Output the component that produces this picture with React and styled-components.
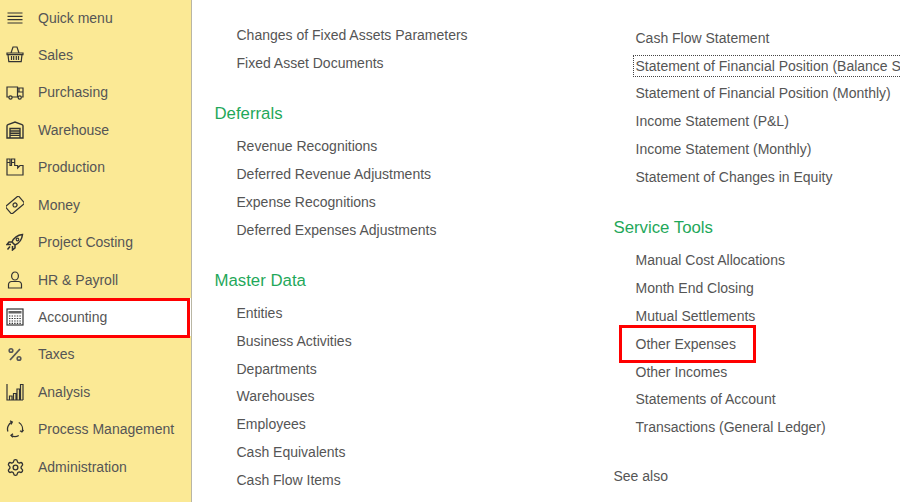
import styled, { createGlobalStyle } from "styled-components";
import { Settings } from "lucide-react";

const GlobalStyle = createGlobalStyle`
  html, body {
    margin: 0;
    height: 100%;
    overflow: hidden;
    background: #fff;
  }
  body {
    font-family: "Liberation Sans", Arial, sans-serif;
    font-size: 14px;
    color: #555;
  }
`;

const Svg = ({ children }) => (
  <IconSvg viewBox="0 0 18 18">{children}</IconSvg>
);

const icons = {
  menu: (
    <Svg>
      <path d="M1.5 4h15M1.5 7.3h15M1.5 10.7h15M1.5 14h15" />
    </Svg>
  ),
  basket: (
    <Svg>
      <path d="M5 7l2-6h4l2 6M1 7h16v1.6H1zM2 8.6l.8 7h12.4l.8-7M5.5 10v4M7.7 10v4M10.3 10v4M12.5 10v4" />
    </Svg>
  ),
  truck: (
    <Svg>
      <path d="M3 14H1V4h10.5v10H6M11.5 5h5.5v9h-1.5M11.5 14H12M12 9h5M13 5.5v3.5" />
      <circle cx="4.5" cy="14.5" r="1.6" />
      <circle cx="13.7" cy="14.5" r="1.6" />
    </Svg>
  ),
  warehouse: (
    <Svg>
      <path d="M1 17V5Q1 4 2 3.6L9 1l7 2.6q1 .4 1 1.4V17zM4 17V7.5h10V17M4 10h10M4 12.2h10M4 14.4h10" strokeWidth="1.4" />
    </Svg>
  ),
  production: (
    <Svg>
      <path d="M1 17V1h3v6.5h1.5V1h3.2v6.5h3V10L14 7.5h3V17zM1 4.5h3M5.5 4.5h3.2" />
    </Svg>
  ),
  money: (
    <Svg>
      <g transform="rotate(-40 9 9)">
        <rect x="0.5" y="4" width="17" height="10" rx="1.5" />
        <circle cx="9" cy="9" r="2" />
      </g>
    </Svg>
  ),
  rocket: (
    <Svg>
      <path d="M16.5 1.5C12 2 8 4.5 6 9l3 3c4.5-2 7-6 7.5-10.500zM6 9H3L1 11.500h4M9 12v3l-2.500 2v-4M4 13.500l-2.500 3" strokeWidth="1.5" />
      <circle cx="11.500" cy="6.500" r="1.300" />
    </Svg>
  ),
  person: (
    <Svg>
      <ellipse cx="9" cy="5" rx="3.4" ry="4" />
      <path d="M2.500 17v-3.500a3 3 0 0 1 3-3h7a3 3 0 0 1 3 3V17z" />
    </Svg>
  ),
  calculator: (
    <Svg>
      <rect x="1" y="1" width="16" height="16" />
      <rect x="2.500" y="3" width="13" height="2.500" fill="#666" stroke="none" />
      <path d="M3 8h12M3 10.500h12M3 13h12M3 15.300h12" strokeDasharray="1.4 1.2" />
    </Svg>
  ),
  percent: (
    <Svg>
      <path d="M14 4L4 15" strokeWidth="1.8" stroke="#555" />
      <circle cx="5" cy="5.500" r="1.800" strokeWidth="1.6" stroke="#555" />
      <circle cx="13" cy="13.500" r="1.800" strokeWidth="1.6" stroke="#555" />
    </Svg>
  ),
  chart: (
    <Svg>
      <path d="M1 1v16h16M3.500 17v-4h2.500v4M7.500 17v-6.500H10V17M11 17V6h2.500v11M14.500 17V1.500H17V17" />
    </Svg>
  ),
  process: (
    <Svg>
      <path d="M1.950 11.570A7.500 7.500 0 0 1 5.830 2.200M12.750 2.500a7.500 7.500 0 0 1 3.300 9.060M12.750 15.500a7.500 7.500 0 0 1-7.500 0" strokeWidth="1.300" />
      <path d="M4 .8l2.300 1.200L5 4.500M14 10.800l1.900 1.200 1.600-2M7 17.300l-2-1.900 2-1.600" strokeWidth="1.300" />
    </Svg>
  ),
  gear: <Settings size={19} strokeWidth={1.7} color="#333" />,
};

const menuItems = [
  { icon: "menu", label: "Quick menu" },
  { icon: "basket", label: "Sales" },
  { icon: "truck", label: "Purchasing" },
  { icon: "warehouse", label: "Warehouse" },
  { icon: "production", label: "Production" },
  { icon: "money", label: "Money" },
  { icon: "rocket", label: "Project Costing" },
  { icon: "person", label: "HR & Payroll" },
  { icon: "calculator", label: "Accounting", active: true },
  { icon: "percent", label: "Taxes" },
  { icon: "chart", label: "Analysis" },
  { icon: "process", label: "Process Management" },
  { icon: "gear", label: "Administration" },
];

const leftColumn = [
  {
    links: ["Changes of Fixed Assets Parameters", "Fixed Asset Documents"],
  },
  {
    title: "Deferrals",
    links: [
      "Revenue Recognitions",
      "Deferred Revenue Adjustments",
      "Expense Recognitions",
      "Deferred Expenses Adjustments",
    ],
  },
  {
    title: "Master Data",
    links: [
      "Entities",
      "Business Activities",
      "Departments",
      "Warehouses",
      "Employees",
      "Cash Equivalents",
      "Cash Flow Items",
      "Expense Items",
    ],
  },
];

const rightColumn = [
  {
    links: [
      "Cash Flow Statement",
      "Statement of Financial Position (Balance Sheet)",
      "Statement of Financial Position (Monthly)",
      "Income Statement (P&L)",
      "Income Statement (Monthly)",
      "Statement of Changes in Equity",
    ],
  },
  {
    title: "Service Tools",
    links: [
      "Manual Cost Allocations",
      "Month End Closing",
      "Mutual Settlements",
      "Other Expenses",
      "Other Incomes",
      "Statements of Account",
      "Transactions (General Ledger)",
    ],
  },
];

const FOCUSED = "Statement of Financial Position (Balance Sheet)";
const MARKED = "Other Expenses";

function Column({ sections, offset }) {
  return (
    <ColumnBox $offset={offset}>
      {sections.map((section, index) => (
        <section key={index}>
          {section.title && <Heading>{section.title}</Heading>}
          {section.links.map((link) => (
            <LinkRow key={link}>
              <LinkText $focused={link === FOCUSED} $marked={link === MARKED}>
                {link}
              </LinkText>
            </LinkRow>
          ))}
        </section>
      ))}
    </ColumnBox>
  );
}

export default function App() {
  return (
    <Page>
      <GlobalStyle />
      <Sidebar>
        {menuItems.map((item) => (
          <MenuItem key={item.label} $active={item.active}>
            <IconBox>{icons[item.icon]}</IconBox>
            {item.label}
          </MenuItem>
        ))}
      </Sidebar>
      <Content>
        <Column sections={leftColumn} offset={21} />
        <div>
          <Column sections={rightColumn} offset={24} />
          <SeeAlso>See also</SeeAlso>
        </div>
      </Content>
    </Page>
  );
}

const Page = styled.div`
  display: flex;
  height: 502px;
  width: 900px;
  overflow: hidden;
`;

const Sidebar = styled.nav`
  flex: none;
  box-sizing: border-box;
  width: 192px;
  height: 502px;
  background: #fbe995;
  border-right: 1px solid #b9b6a4;
`;

const MenuItem = styled.div`
  position: relative;
  display: flex;
  align-items: center;
  box-sizing: border-box;
  height: 37.45px;
  padding-left: 5.5px;
  gap: 14.5px;
  white-space: nowrap;
  background: ${({ $active }) => ($active ? "#fff" : "transparent")};

  &:first-child {
    margin-top: -1.2px;
  }

  ${({ $active }) =>
    $active &&
    `&::after {
      content: "";
      position: absolute;
      top: 0;
      left: 0;
      right: 1px;
      bottom: -2.5px;
      border: 3px solid #f00;
    }`}
`;

const IconBox = styled.span`
  display: flex;
  flex: none;
  width: 18px;
  height: 18px;

  & > svg {
    flex: none;
  }
`;

const IconSvg = styled.svg`
  width: 18px;
  height: 18px;
  fill: none;
  stroke: #333;
  stroke-width: 1.2;
`;

const Content = styled.main`
  flex: 1;
  display: grid;
  grid-template-columns: 399px 1fr;
  padding-left: 22.5px;
  min-width: 0;
`;

const ColumnBox = styled.div`
  padding-top: ${({ $offset }) => $offset}px;
`;

const Heading = styled.h2`
  margin: 24.6px 0 7.1px;
  height: 24px;
  line-height: 26px;
  font-size: 16.8px;
  font-weight: normal;
  color: #1fa85a;
`;

const LinkRow = styled.div`
  display: flex;
  align-items: center;
  height: 27.8px;
  padding-left: 22px;
  white-space: nowrap;
`;

const LinkText = styled.span`
  position: relative;
  outline: ${({ $focused }) => ($focused ? "1px dotted #444" : "none")};
  outline-offset: 2px;

  ${({ $marked }) =>
    $marked &&
    `&::after {
      content: "";
      position: absolute;
      left: -17px;
      right: -20px;
      top: -11px;
      bottom: -11.5px;
      border: 3px solid #f00;
    }`}
`;

const SeeAlso = styled.div`
  margin-top: 21.1px;
  height: 28px;
  line-height: 28px;
`;
